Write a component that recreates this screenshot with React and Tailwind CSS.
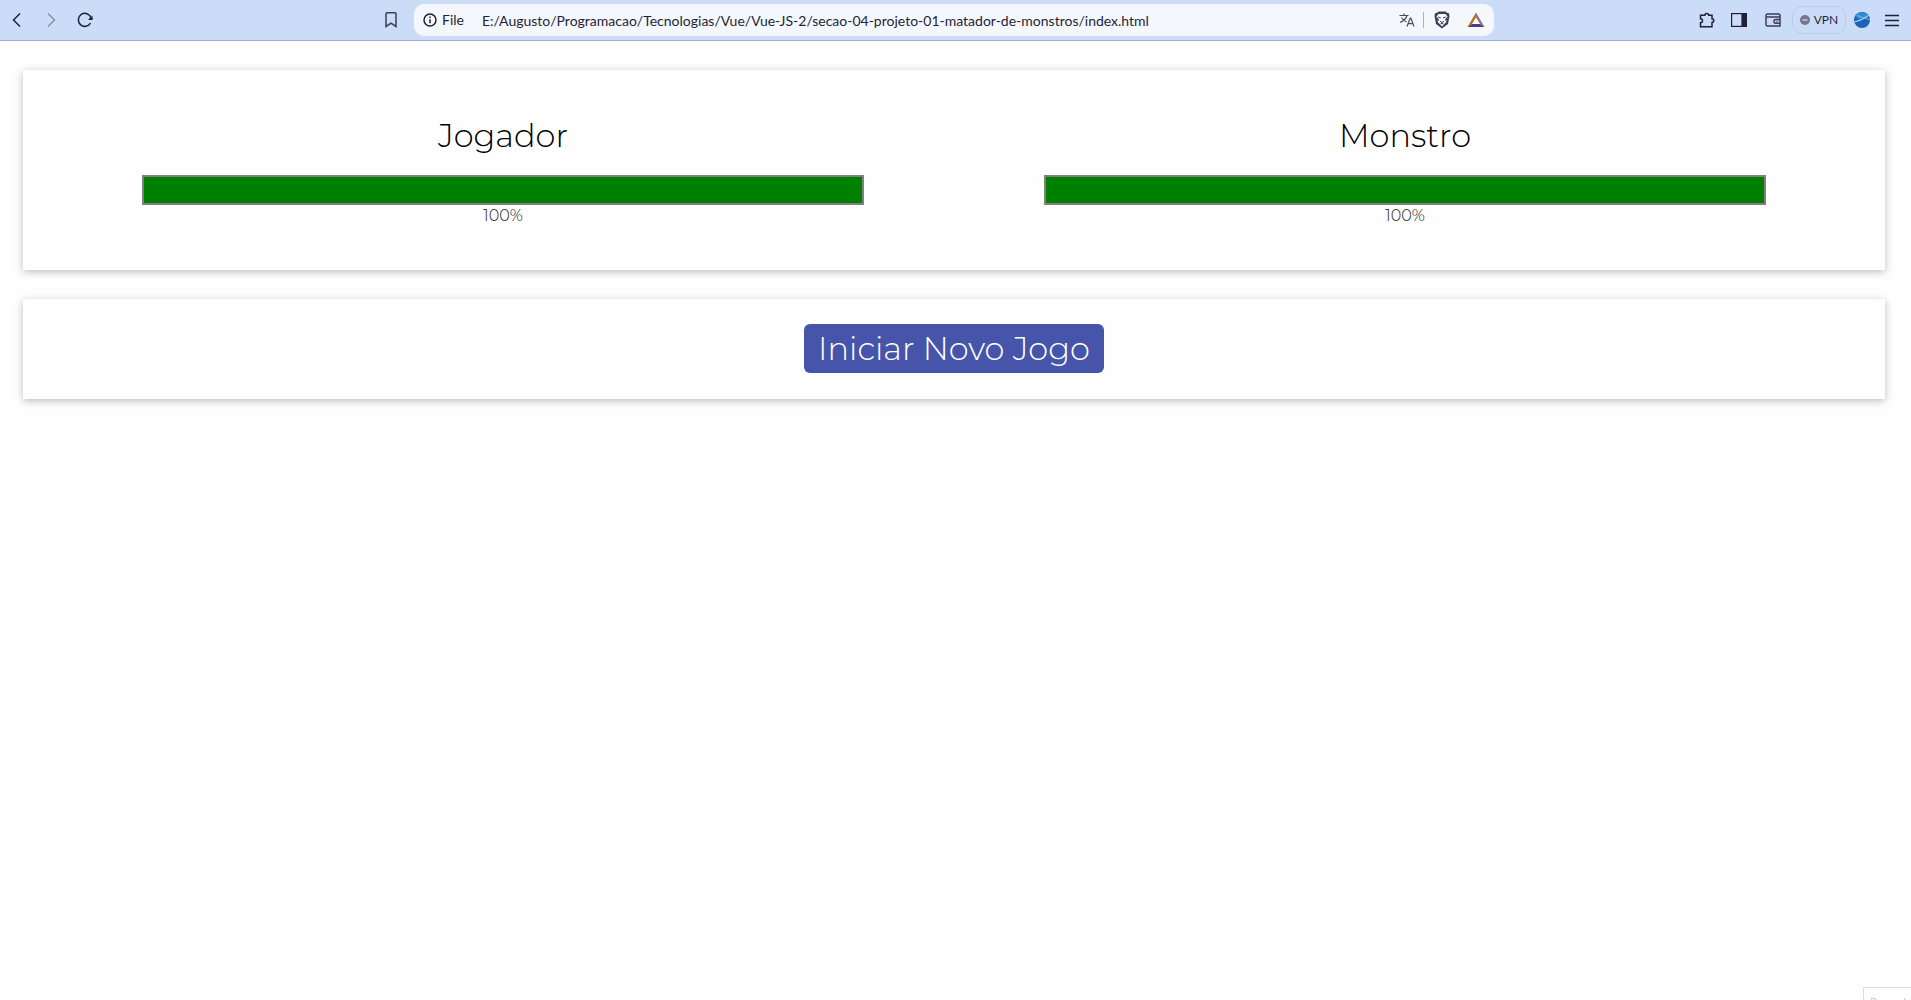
import React from "react";

function Icon({ children, className = "", viewBox = "0 0 16 16", size = "size-4", width = 1.5 }) {
  return (
    <svg
      viewBox={viewBox}
      className={`${size} shrink-0 ${className}`}
      fill="none"
      stroke="currentColor"
      strokeWidth={width}
      aria-hidden="true"
    >
      {children}
    </svg>
  );
}

function ToolButton({ label, children }) {
  return (
    <button type="button" aria-label={label} className="flex size-5 shrink-0 items-center justify-center">
      {children}
    </button>
  );
}

function AddressBar() {
  return (
    <div className="flex h-8 w-[1080px] min-w-0 items-center rounded-[10px] bg-[#f4f8fd] pr-2 pl-2">
      <button type="button" className="flex items-center gap-1 pr-[18px] text-sm">
        <Icon>
          <circle cx="8" cy="8" r="6" />
          <path d="M8 7.2v4M8 4.400v1.600" />
        </Icon>
        File
      </button>
      <input
        type="text"
        aria-label="Address"
        defaultValue="E:/Augusto/Programacao/Tecnologias/Vue/Vue-JS-2/secao-04-projeto-01-matador-de-monstros/index.html"
        className="h-full min-w-0 grow bg-transparent text-sm outline-none"
      />
      <div className="flex items-center">
        <ToolButton label="Translate">
          <Icon width={1.2} className="text-[#4b4b60]">
            <path d="M.5 3.500h9M5 1.500v2M8 3.500C7 7 4.500 9 1 10.500M2.500 5.500C4 8 5.500 9 7.500 10M8 14.500l3.200-8.500h.6L15 14.500M9.200 11.700h4.600" />
          </Icon>
        </ToolButton>
        <span className="mr-2 ml-[6px] h-4 w-px bg-[#a3b0cf]" />
        <ToolButton label="Shields">
          <svg viewBox="0 0 16 18" className="h-[18px] w-4" aria-hidden="true">
            <path d="M4.500.5h7l1.500 1.300 2 .4.5 3L14 13l-6 4.500L2 13 .5 5.200l.5-3 2-.4z" fill="#3d3d58" />
            <path d="M4.500 3h7l2 2.500-1.200 5.500L8 15.500 3.700 11 2.500 5.500z" fill="#f4f8fd" />
            <path d="M4.200 6l2.600.9M11.800 6l-2.600.9M6 10.200l2 1.400 2-1.400M6.500 13l1.500-.6 1.500.6" fill="none" stroke="#3d3d58" strokeWidth="1" />
            <path d="M2.500 5.500L5 8.500 3.700 11zM13.500 5.500L11 8.500l1.300 2.500z" fill="#3d3d58" />
          </svg>
        </ToolButton>
        <span className="w-[14px]" />
        <ToolButton label="Rewards">
          <svg viewBox="0 0 18 16" className="h-4 w-[18px]" aria-hidden="true">
            <path d="M9 .5L.5 15l5-3L9 6z" fill="#c46a12" />
            <path d="M9 .5L17.500 15l-5-3L9 6z" fill="#97717c" />
            <path d="M.5 15h17l-5-3.200h-7z" fill="#4b3d8c" />
            <path d="M9 5.500l4 6.500H5z" fill="#fff" />
          </svg>
        </ToolButton>
      </div>
    </div>
  );
}

function BrowserBar() {
  return (
    <header className="flex h-[41px] items-center justify-between border-b border-[#9fb0cf] bg-[#cbdcf8] pr-[9px] pl-[7px] font-['Lato','Open_Sans',sans-serif] text-[#1f1f3a]">
      <nav className="flex w-[394px] items-center" aria-label="Navigation">
        <ToolButton label="Back">
          <Icon><path d="M11 1.500L4.500 8l6.500 6.500" /></Icon>
        </ToolButton>
        <span className="w-[14px]" />
        <ToolButton label="Forward">
          <Icon className="text-[#8f8fa6]"><path d="M5 1.500L11.500 8 5 14.500" /></Icon>
        </ToolButton>
        <span className="w-[14px]" />
        <ToolButton label="Reload">
          <Icon>
            <path d="M13.500 11.200A6.500 6.500 0 1 1 14 5.600" />
            <circle cx="14" cy="6.500" r="1.500" fill="currentColor" stroke="none" />
            <path d="M15.500 3.500v4.500h-4.500z" fill="currentColor" stroke="none" />
          </Icon>
        </ToolButton>
        <span className="grow" />
        <ToolButton label="Bookmark">
          <Icon className="text-[#3d3d58]"><path d="M3 1.800q0-1 1-1h8q1 0 1 1v12.700l-5-3.300-5 3.300z" /></Icon>
        </ToolButton>
      </nav>
      <span className="w-[13px] shrink-0" />
      <AddressBar />
      <span className="grow" />
      <div className="flex items-center">
        <ToolButton label="Extensions">
          <Icon><path d="M1.500 3.200h4.300a2 1.800 0 0 1 4 0H13v3.600a1.800 1.800 0 0 1 0 3.600v4.300H1.500v-4a2 2 0 0 0 0-4z" /></Icon>
        </ToolButton>
        <span className="w-3" />
        <ToolButton label="Sidebar">
          <Icon width={1.2}>
            <rect x=".6" y="1.600" width="14.800" height="12.800" />
            <path d="M11 1.600h4.400v12.800H11z" fill="currentColor" />
          </Icon>
        </ToolButton>
        <span className="w-[14px]" />
        <ToolButton label="Wallet">
          <Icon className="text-[#3d3d58]">
            <path d="M15 5V3.500q0-1.500-1.500-1.500h-11Q1 2 1 3.500v9Q1 14 2.500 14H15zM1 5h14M15 7.500h-4.500q-1.500 0-1.500 1.500v.8q0 1.500 1.500 1.500H15M11.500 9.400h1" />
          </Icon>
        </ToolButton>
        <button type="button" className="ml-[9px] flex h-7 w-[54px] items-center justify-center gap-1 rounded-[10px] border border-[#bccdec] text-xs">
          <svg viewBox="0 0 10 10" className="size-[10px]" aria-hidden="true">
            <circle cx="5" cy="5" r="5" fill="#74768b" />
            <path d="M2.500 5h5" stroke="#cbdcf8" strokeWidth="1.300" />
          </svg>
          VPN
        </button>
        <span className="w-[6px]" />
        <ToolButton label="Profile">
          <svg viewBox="0 0 16 16" className="size-4" aria-hidden="true">
            <circle cx="8" cy="8" r="8" fill="#1f62b8" />
            <path d="M1 4.200A8 8 0 0 1 14.800 4L6 8z" fill="#2b8ed0" />
            <path d="M.5 10Q8 8.500 14.500 3.500" fill="none" stroke="#dbe9fb" strokeWidth="1" />
            <path d="M3 3.500Q9 6 15.800 7.500" fill="none" stroke="#a9cdf0" strokeWidth=".7" />
          </svg>
        </ToolButton>
        <span className="w-[10px]" />
        <ToolButton label="Menu">
          <Icon width={1.3}><path d="M1 3.500h14M1 8.500h14M1 13.500h14" /></Icon>
        </ToolButton>
      </div>
    </header>
  );
}

function Player({ name, life }) {
  return (
    <div className="flex w-2/5 flex-col items-center">
      <h1 className="text-[32px] leading-[39px] font-light">{name}</h1>
      <div className="mt-5 h-[30px] w-full border-2 border-[#808080]" role="progressbar" aria-label={name} aria-valuenow={life}>
        <div className="h-full bg-[#008000]" style={{ width: `${life}%` }} />
      </div>
      <div className="text-base leading-[22px] font-light text-[#222]">{life}%</div>
    </div>
  );
}

function Panel({ children, className }) {
  return (
    <section className={`flex bg-[#fefefe] shadow-[0_2px_8px_rgba(0,0,0,0.26)] ${className}`}>
      {children}
    </section>
  );
}

export default function App() {
  return (
    <div className="flex h-screen flex-col overflow-hidden bg-[#fefefe] text-black">
      <BrowserBar />
      <main className="mt-[29px] mr-[26px] ml-[23px] flex flex-col gap-[29px] font-['Montserrat','Inter',sans-serif]">
        <Panel className="justify-around px-[29px] pt-[46px] pb-[43px]">
          <Player name="Jogador" life={100} />
          <Player name="Monstro" life={100} />
        </Panel>
        <Panel className="justify-center pt-[25px] pb-[26px]">
          <button type="button" className="rounded-md bg-[#4655aa] px-[14px] py-[5px] text-[32px] leading-[39px] font-light text-white">
            Iniciar Novo Jogo
          </button>
        </Panel>
      </main>
      <div className="mt-auto ml-auto h-[13px] w-12 overflow-hidden border-t border-l border-[#dddddd] pt-[6px] pl-[6px] font-['Open_Sans',sans-serif] text-[11px] leading-4 text-[#c8c8c8]">
        Record
      </div>
    </div>
  );
}
